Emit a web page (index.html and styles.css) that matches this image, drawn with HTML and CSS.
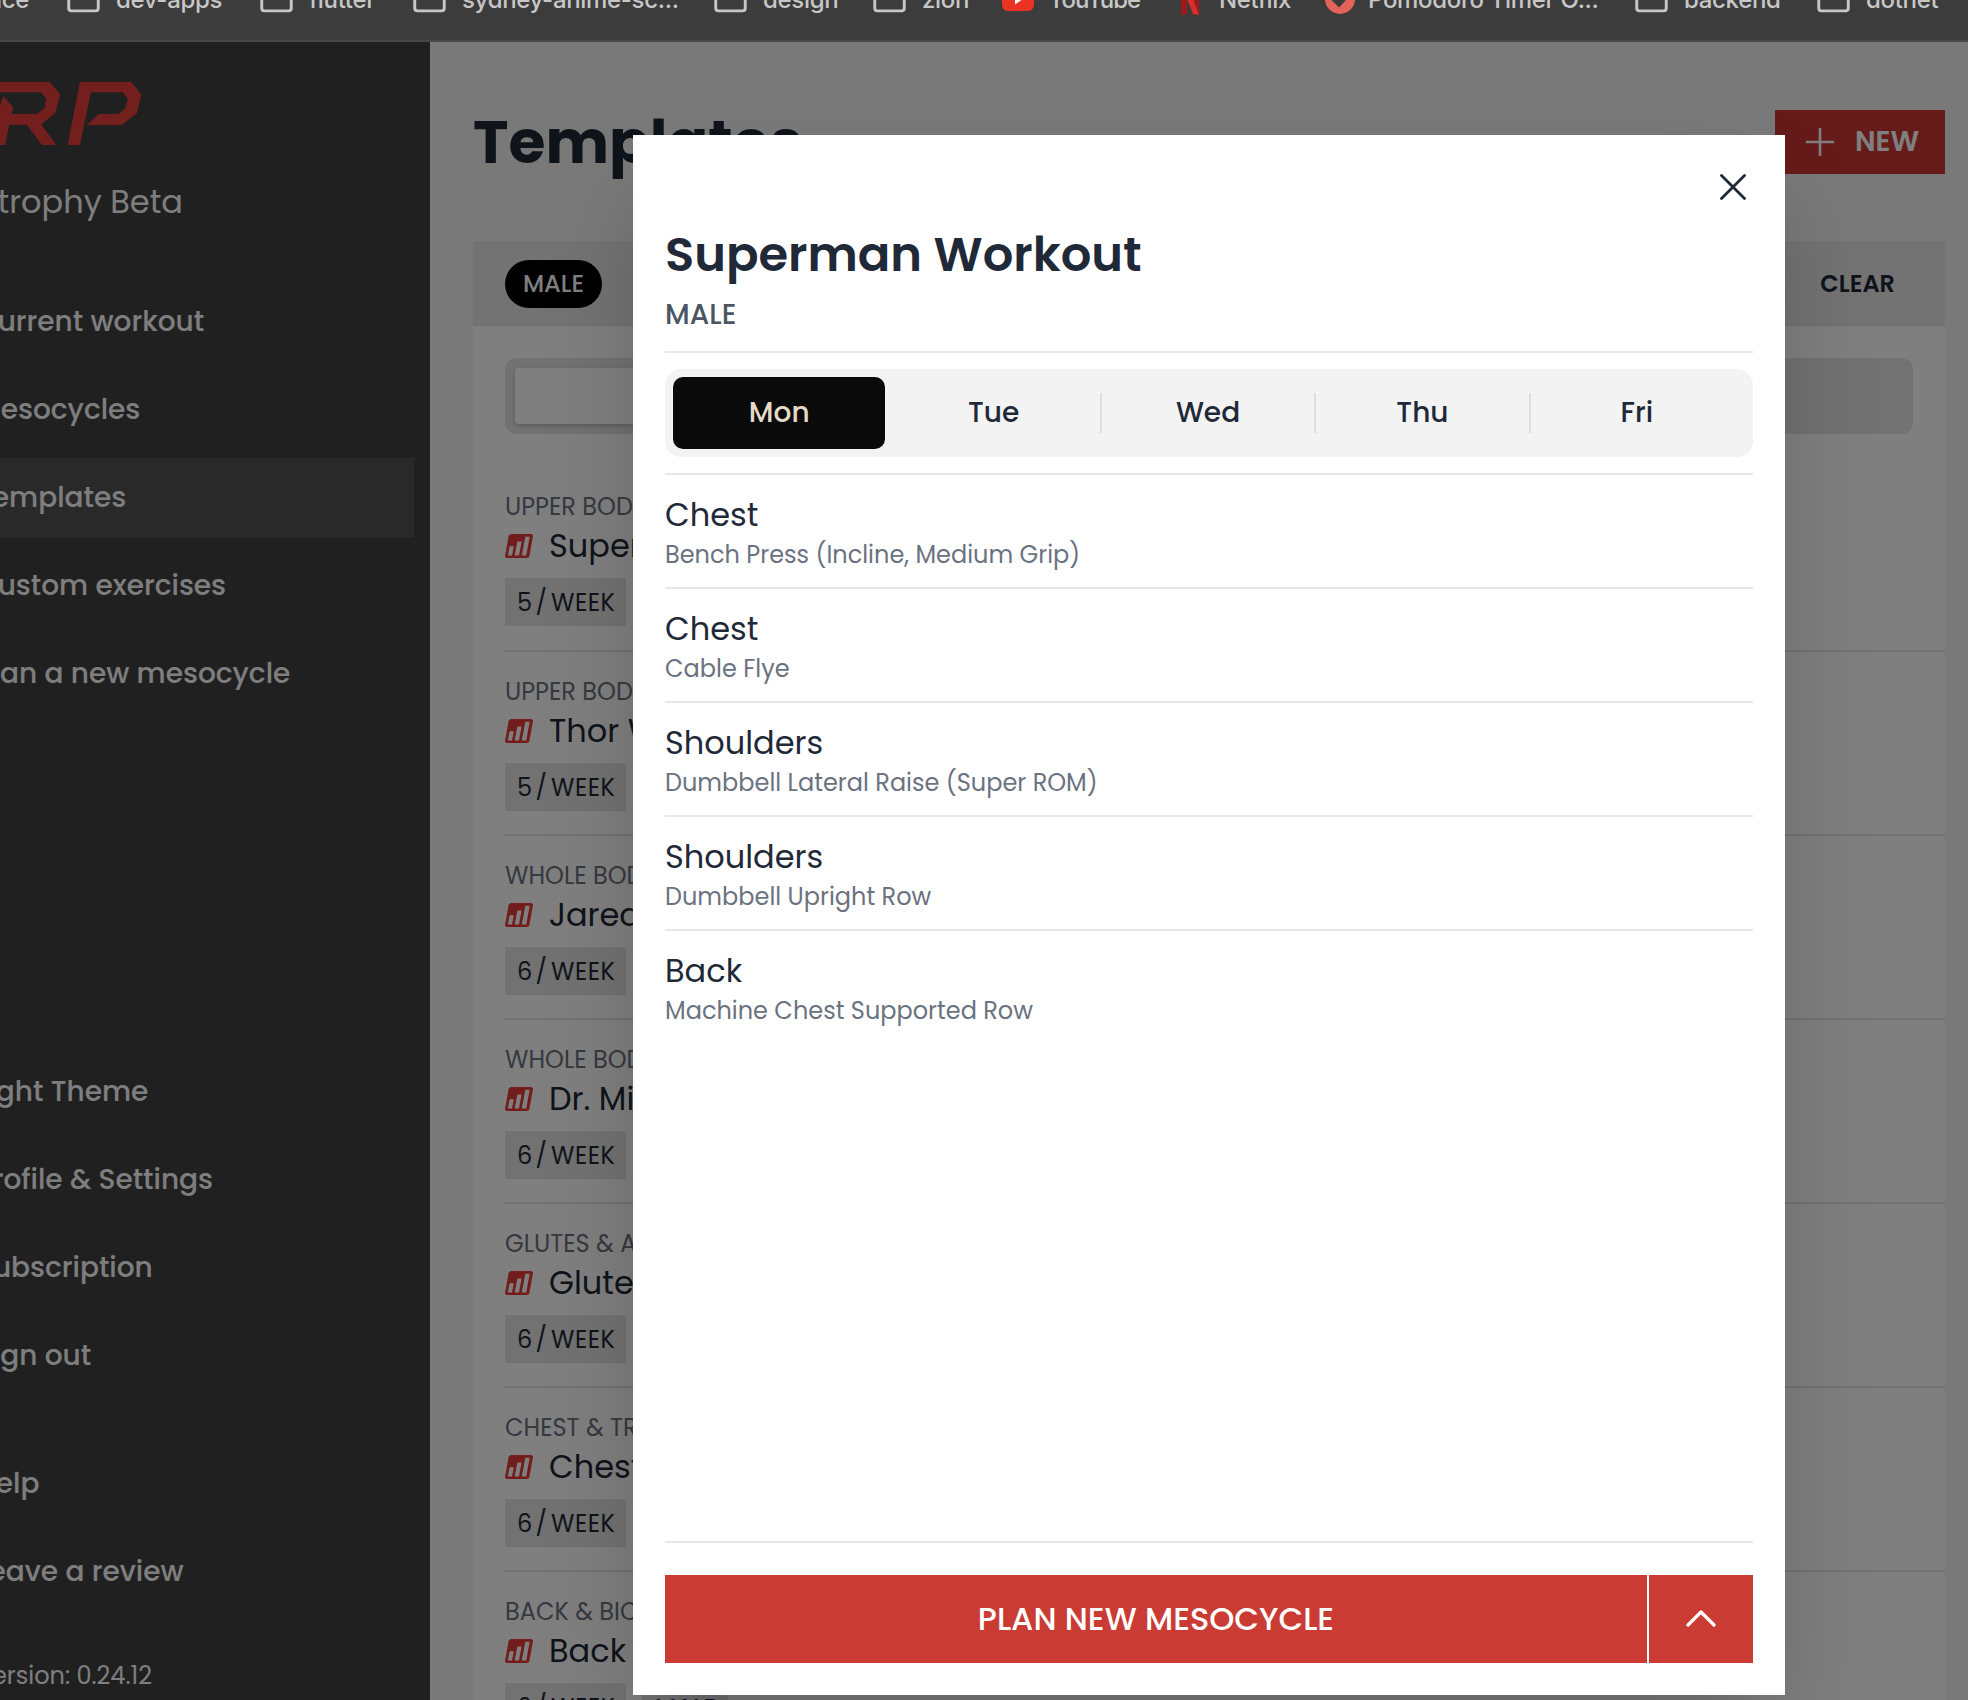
FILE: index.html
```html
<!DOCTYPE html>
<html lang="en">
<head>
<meta charset="utf-8">
<title>Templates</title>
<link rel="stylesheet" href="styles.css">
</head>
<body>
<svg class="defs" aria-hidden="true">
  <symbol id="folder" viewBox="0 0 34 30"><path d="M1.8 4.5Q1.8 1.5 4.8 1.5H13L16 5H29.5Q32.2 5 32.2 8V24.500Q32.200 27.200 29.500 27.200H4.500Q1.800 27.200 1.800 24.500Z" fill="none" stroke="#c7c7c7" stroke-width="3"/></symbol>
  <symbol id="bars" viewBox="0 0 28 24"><path d="M6.500 0H26Q28.300 0 27.900 2.300L24.500 21.500Q24 24 21.500 24H2Q-.3 24 .1 21.700L3.500 2.500Q4 0 6.500 0Z" fill="#e43b37"/><path d="M4.600 12.300H8.700L7 21.500H2.900ZM12.300 7.500H16.600L14 21.500H9.700ZM20.300 2.800H24.700L21.200 21.500H16.800Z" fill="#fff"/></symbol>
</svg>

<nav class="bookmarks">
  <div class="bm"><span>ice</span></div>
  <div class="bm"><svg class="folder"><use href="#folder"/></svg><span>dev-apps</span></div>
  <div class="bm"><svg class="folder"><use href="#folder"/></svg><span>flutter</span></div>
  <div class="bm"><svg class="folder"><use href="#folder"/></svg><span>sydney-anime-sc...</span></div>
  <div class="bm"><svg class="folder"><use href="#folder"/></svg><span>design</span></div>
  <div class="bm"><svg class="folder"><use href="#folder"/></svg><span>zion</span></div>
  <div class="bm"><svg class="yt" viewBox="0 0 32 24"><rect width="32" height="24" rx="6" fill="#ea3323"/><path d="M13 7L21 12 13 17.500Z" fill="#fff"/></svg><span class="tight">YouTube</span></div>
  <div class="bm"><svg class="nf" viewBox="0 0 32 32"><path d="M7 0H13V31L7 32Z" fill="#9e1a1a"/><path d="M19 0H25V32L19 31Z" fill="#9e1a1a"/><path d="M7 0H13L25 32 19 31Z" fill="#d6302b"/></svg><span>Netflix</span></div>
  <div class="bm pomo"><svg class="pm" viewBox="0 0 30 30"><circle cx="15" cy="15" r="15" fill="#e2635a"/><path d="M7 13L14 20 24 9" fill="none" stroke="#3c3c3c" stroke-width="5"/></svg><span>Pomodoro Timer O...</span></div>
  <div class="bm"><svg class="folder"><use href="#folder"/></svg><span>backend</span></div>
  <div class="bm"><svg class="folder"><use href="#folder"/></svg><span>dotnet</span></div>
</nav>

<div class="app">
  <aside class="side">
    <svg class="logo" viewBox="0 246 340 190" preserveAspectRatio="none"><path fill="#e63e3b" fill-rule="evenodd" d="M0 246H118L143 283 132 338 98 373 134 435H100L64 374H22L12 435H0V318L8 288 31 322 28 342H88L106 325 110 297 98 277H0ZM190 246H312L336 283 326 338 290 375H206L235 342H282L298 325 304 297 292 277H216L190 435H161Z"/></svg>
    <div class="brand">Hypertrophy Beta</div>
    <ul class="menu">
      <li>Current workout</li>
      <li>Mesocycles</li>
      <li class="active">Templates</li>
      <li>Custom exercises</li>
      <li>Plan a new mesocycle</li>
    </ul>
    <ul class="menu account">
      <li>Light Theme</li>
      <li>Profile &amp; Settings</li>
      <li>Subscription</li>
      <li>Sign out</li>
    </ul>
    <ul class="menu support">
      <li>Help</li>
      <li>Leave a review</li>
    </ul>
    <div class="version">Version: 0.24.12</div>
  </aside>

  <main class="main">
    <header class="head">
      <h1>Templates</h1>
      <button class="new"><svg viewBox="0 0 28 28"><path d="M14 0V28M0 14H28" stroke="#fff" stroke-width="2.600"/></svg>NEW</button>
    </header>
    <section class="card">
      <div class="filters"><span class="pill">MALE</span><span class="clear">CLEAR</span></div>
      <div class="search"><div class="field"></div></div>
      <ul class="list">
        <li><p>UPPER BODY</p><h3><svg><use href="#bars"/></svg>Superman</h3><div class="tags"><span class="tag"><b>5</b><b>/</b>WEEK</span></div></li>
        <li><p>UPPER BODY</p><h3><svg><use href="#bars"/></svg>Thor Workout</h3><div class="tags"><span class="tag"><b>5</b><b>/</b>WEEK</span></div></li>
        <li><p>WHOLE BODY</p><h3><svg><use href="#bars"/></svg>Jared</h3><div class="tags"><span class="tag"><b>6</b><b>/</b>WEEK</span></div></li>
        <li><p>WHOLE BODY</p><h3><svg><use href="#bars"/></svg>Dr. Mike</h3><div class="tags"><span class="tag"><b>6</b><b>/</b>WEEK</span></div></li>
        <li><p>GLUTES &amp; ARMS</p><h3><svg><use href="#bars"/></svg>Glutes</h3><div class="tags"><span class="tag"><b>6</b><b>/</b>WEEK</span></div></li>
        <li><p>CHEST &amp; TRICEPS</p><h3><svg><use href="#bars"/></svg>Chest</h3><div class="tags"><span class="tag"><b>6</b><b>/</b>WEEK</span></div></li>
        <li><p>BACK &amp; BICEPS</p><h3><svg><use href="#bars"/></svg>Back</h3><div class="tags"><span class="tag"><b>6</b><b>/</b>WEEK</span><span class="tag solid">MALE</span></div></li>
      </ul>
    </section>
  </main>
</div>

<div class="overlay">
  <div class="modal" role="dialog">
    <div class="close"><svg viewBox="0 0 26 26"><path d="M1.500 1.500L24.500 24.500M24.500 1.500L1.500 24.500" stroke="#1f2937" stroke-width="2.800" stroke-linecap="round"/></svg></div>
    <h2>Superman Workout</h2>
    <div class="sub">MALE</div>
    <div class="days">
      <div class="day on">Mon</div><div class="day">Tue</div><div class="day">Wed</div><div class="day">Thu</div><div class="day last">Fri</div>
    </div>
    <ul class="moves">
      <li><h4>Chest</h4><p>Bench Press (Incline, Medium Grip)</p></li>
      <li><h4>Chest</h4><p>Cable Flye</p></li>
      <li><h4>Shoulders</h4><p>Dumbbell Lateral Raise (Super ROM)</p></li>
      <li><h4>Shoulders</h4><p>Dumbbell Upright Row</p></li>
      <li><h4>Back</h4><p>Machine Chest Supported Row</p></li>
    </ul>
    <footer class="foot">
      <button class="plan">PLAN NEW MESOCYCLE</button>
      <button class="more"><svg viewBox="0 0 30 18"><path d="M2 15L15 2 28 15" fill="none" stroke="#fff" stroke-width="3.200" stroke-linecap="round" stroke-linejoin="round"/></svg></button>
    </footer>
  </div>
</div>
</body>
</html>
```
FILE: styles.css
```css
* { box-sizing: border-box; margin: 0; padding: 0; }
html, body { height: 1700px; overflow: hidden; }
body { position: relative; font-family: Poppins, Inter, sans-serif; color: #1f2937; background: #f3f3f3; }
ul { list-style: none; }
button { border: 0; font-family: inherit; color: #fff; }
svg { display: block; flex: none; }
.defs { display: none; }

.bookmarks { display: grid; grid-template-columns: 67px 193px 153px 301px 159px 129px 172px 151px 310px 182px 151px; height: 42px; overflow: hidden; background: #3c3c3c; border-bottom: 2px solid #484848; color: #c7c7c7; font-family: Inter, sans-serif; font-size: 24px; font-weight: 500; letter-spacing: -0.32px; }
.bm { display: flex; align-items: center; gap: 16px; height: 32px; margin-top: -17px; line-height: 32px; white-space: nowrap; }
.bm span { padding-top: 2px; }
.bm:first-child span { margin-left: -4px; }
.bm .tight { margin-left: -2px; letter-spacing: -1.1px; }
.bm.pomo { gap: 13px; }
.folder { width: 33px; height: 30px; }
.yt { width: 32px; height: 24px; }
.nf { width: 32px; height: 32px; margin-right: -3px; }
.pm { width: 30px; height: 30px; }

.app { display: flex; height: 1658px; overflow: hidden; }

.side { width: 430px; flex: none; padding-top: 40px; background: #414141; color: #fdfdfd; overflow: hidden; white-space: nowrap; }
.logo { width: 143px; height: 63.300px; }
.brand { display: flex; justify-content: flex-end; width: 183px; margin-top: 32.700px; font-size: 32px; line-height: 48px; }
.menu { display: flex; flex-direction: column; gap: 8px; width: 414px; margin-top: 56px; font-size: 28px; font-weight: 500; text-indent: -24px; }
.menu li { height: 80px; line-height: 79px; }
.menu .active { background: #525252; }
.menu.account { margin-top: 338px; }
.menu.support { margin-top: 48px; }
.version { display: flex; justify-content: flex-end; width: 152px; margin-top: 48px; font-size: 24px; line-height: 32px; }

.main { flex: 1; padding: 68px 23px 0 43px; }
.head { display: flex; justify-content: space-between; align-items: center; height: 64px; }
.head h1 { font-size: 60px; line-height: 64px; font-weight: 700; }
.new { display: flex; align-items: center; gap: 21px; width: 170px; height: 64px; padding-left: 31px; background: #ca3733; font-size: 28px; font-weight: 600; }
.new svg { width: 28px; height: 28px; }
.card { height: 1500px; margin-top: 68px; background: #fff; }
.filters { display: flex; justify-content: space-between; align-items: center; height: 84px; padding: 0 50px 0 32px; background: #e7e7e7; border-top: 2px solid #e1e1e1; border-bottom: 2px solid #e1e1e1; }
.pill { width: 97px; height: 48px; border-radius: 24px; background: #000; color: #fff; font-size: 24px; font-weight: 500; line-height: 48px; text-align: center; }
.clear { padding-bottom: 2px; font-size: 24px; font-weight: 600; }
.search { height: 76px; margin: 32px 32px 0; padding: 10px; border-radius: 12px; background: #e4e4e4; }
.field { width: 460px; height: 56px; border-radius: 4px; background: #fff; box-shadow: 0 2px 5px rgba(0, 0, 0, .2); }
.list { padding-left: 32px; }
.list li { height: 184px; padding-top: 24px; border-bottom: 2px solid #e5e5e8; white-space: nowrap; }
.list li:first-child { height: 218px; padding-top: 57px; }
.list p { font-size: 24px; line-height: 32px; color: #6b7280; }
.list h3 { display: flex; align-items: center; gap: 16px; height: 40px; margin-top: 3px; font-size: 32px; line-height: 40px; font-weight: 400; }
.list h3 svg { width: 28px; height: 24px; }
.tags { display: flex; gap: 16px; margin-top: 12px; }
.tag { display: flex; gap: 4px; width: 121px; height: 48px; padding-left: 12px; background: #e5e5e5; font-size: 24px; line-height: 50px; letter-spacing: .5px; }
.tag b { width: 13px; font-weight: 400; text-align: center; }
.tag b + b { margin: 0 -1px 0 1px; }
.tag.solid { width: 86px; padding-left: 13px; font-weight: 500; letter-spacing: 0; }

.overlay { position: absolute; inset: 42px 0 0 0; padding: 93px 0 0 633px; background: rgba(0, 0, 0, .5); }
.modal { display: flex; flex-direction: column; width: 1152px; height: 1560px; padding: 0 32px 32px; background: #fff; box-shadow: 0 50px 100px -24px rgba(0, 0, 0, .27); }
.close { display: flex; justify-content: flex-end; height: 90px; padding: 39px 7px 0 0; }
.close svg { width: 26px; height: 26px; }
.modal h2 { font-size: 48px; font-weight: 600; line-height: 60px; }
.sub { height: 68px; padding-top: 12px; border-bottom: 2px solid #e5e7eb; font-size: 28px; line-height: 36px; font-weight: 500; color: #4b5563; }
.days { display: flex; height: 88px; margin-top: 16px; padding: 8px; border-radius: 16px; background: #f3f3f3; }
.day { position: relative; flex: 1; padding-right: 2px; font-size: 28px; font-weight: 500; line-height: 71px; text-align: center; }
.day:not(.on):not(.last)::after { content: ""; position: absolute; right: 0; top: 16px; width: 2px; height: 40px; background: #dedede; }
.day.on { margin-right: 2px; padding: 0; border-radius: 10px; background: #0a0a0a; color: #e5dac8; }
.moves { flex: 1; margin-top: 16px; border-top: 2px solid #e5e7eb; }
.moves li { height: 114px; padding-top: 20px; border-bottom: 2px solid #e5e7eb; }
.moves li:last-child { border-bottom: 0; }
.moves h4 { font-size: 32px; line-height: 40px; font-weight: 400; }
.moves p { margin-top: 4px; font-size: 24px; line-height: 32px; color: #6b7280; }
.foot { display: flex; gap: 2px; padding-top: 32px; border-top: 2px solid #e5e7eb; }
.foot button { height: 88px; background: #ca3b33; }
.plan { flex: 1; font-size: 32px; font-weight: 500; }
.more { display: flex; align-items: center; justify-content: center; width: 104px; }
.more svg { width: 30px; height: 18px; }
```
